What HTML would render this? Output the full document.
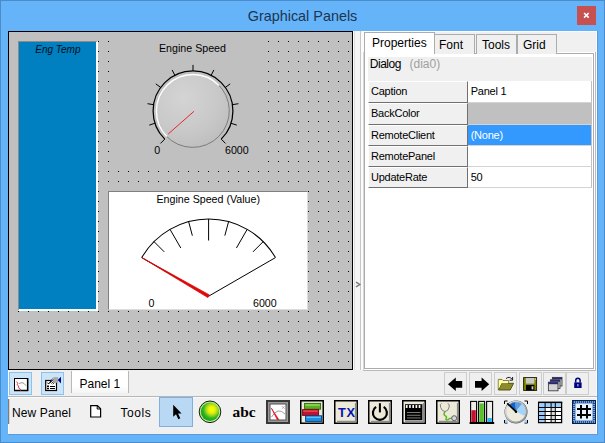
<!DOCTYPE html>
<html><head><meta charset="utf-8">
<style>
*{box-sizing:border-box;margin:0;padding:0}
html,body{width:605px;height:443px;overflow:hidden;background:#65B3F9}
body{position:relative;font-family:"Liberation Sans",sans-serif;font-size:12px;color:#000}
.a{position:absolute}
#win{left:0;top:0;width:605px;height:443px;border:1px solid #4A8CCB;background:#65B3F9}
#inb{left:8px;top:31px;width:590px;height:404px;background:#5E9BD6}
#title{left:0;top:6px;width:605px;text-align:center;font-size:14.4px;color:#1c3550;line-height:20px}
#close{left:577px;top:6px;width:19px;height:19px;background:#C75050}
#client{left:8px;top:31px;width:589px;height:403px;background:#F0F0F0}
#panel{left:8px;top:31px;width:345px;height:339px;background:#C0C0C0;border:1px solid #000;overflow:hidden}
#dots{left:-1px;top:-1px;width:345px;height:339px;background-image:radial-gradient(circle at 0.5px 0.5px,#000 0.55px,rgba(0,0,0,0) 0.9px);background-size:10px 10px}
.pt{font-size:10.67px;line-height:12px;white-space:nowrap;color:#000}
#eng{left:18px;top:41px;width:80px;height:270px;background:#0080C0;border-left:1px solid #8a8a8a;border-top:1px solid #8a8a8a;border-right:2px solid #fff;border-bottom:2px solid #f4ffff}
#knobbox{left:113px;top:35px;width:155px;height:132px;background:#C0C0C0}
#vbox{left:108px;top:191px;width:200px;height:119px;background:#fff;border-left:1px solid #808080;border-top:1px solid #808080;border-right:1px solid #dcdcdc;border-bottom:1px solid #dcdcdc}
#svg{left:0;top:0}
.ui{font-size:12px;line-height:14px;white-space:nowrap}
.th{font-size:11px;letter-spacing:-0.25px;line-height:13px;white-space:nowrap}
/* tabs */
#page{left:364px;top:53px;width:230px;height:316px;background:#fff;border:1px solid #ACACAC}
.tab{top:34px;height:20px;background:#F0F0F0;border:1px solid #ACACAC;border-bottom:none}
#tab0{left:364px;top:32px;width:71px;height:22px;background:#fff;border:1px solid #ACACAC;border-bottom:none}
#hdr{left:368px;top:57px;width:224px;height:24px;background:#F0F0F0}
.lc{left:368px;width:100px;background:#F0F0F0;border-top:1px solid #fff;border-left:1px solid #fff;border-right:1px solid #707070;border-bottom:1px solid #707070}
.vc{left:468px;width:124px;background:#fff;border-bottom:1px solid #d4d4d4;border-right:1px solid #c0c0c0}
/* toolbars */
.b1{top:372px;width:23px;height:23px;background:#CCE4F7;border:1px solid #8EC2EE}
.b2{top:372px;width:23px;height:23px;background:#EFEFEF;border:1px solid #CDCDCD}
</style></head><body>
<div id="win" class="a"></div>
<div id="inb" class="a"></div>
<div id="title" class="a">Graphical Panels</div>
<div id="close" class="a"><svg width="19" height="19" viewBox="0 0 19 19" style="position:absolute;left:0;top:0"><path d="M7.1 7 L11.7 11.6 M11.7 7 L7.1 11.6" stroke="#fff" stroke-width="1.7" fill="none"/></svg></div>
<div id="client" class="a"></div>

<div id="panel" class="a"><div id="dots" class="a"></div></div>
<div id="eng" class="a"></div>
<div class="a pt" style="left:35.3px;top:43.8px;font-style:italic;font-size:10px;color:#000c20">Eng Temp</div>
<div id="knobbox" class="a"></div>
<div id="vbox" class="a"></div>
<div class="a pt" style="left:159px;top:42px">Engine Speed</div>
<div class="a pt" style="left:154.3px;top:143.5px">0</div>
<div class="a pt" style="left:225px;top:143.5px">6000</div>
<div class="a pt" style="left:156.5px;top:193px">Engine Speed (Value)</div>
<div class="a pt" style="left:148.5px;top:296.5px">0</div>
<div class="a pt" style="left:253px;top:296.5px">6000</div>

<div class="a" style="left:596px;top:31px;width:1px;height:403px;background:#FCFEFF"></div>
<div class="a" style="left:353px;top:31px;width:244px;height:1px;background:#FAFDFF"></div>
<div class="a" style="left:8px;top:370px;width:1px;height:64px;background:#FCFEFF"></div>
<!-- splitter -->
<div class="a" style="left:360px;top:31px;width:1px;height:339px;background:#C6C6C6"></div>
<div class="a" style="left:353px;top:31px;width:1px;height:339px;background:#FCFCFC"></div>
<div class="a" style="left:354px;top:31px;width:1px;height:339px;background:#DCDCDC"></div>
<div class="a" style="left:355px;top:31px;width:5px;height:339px;background:#F4F4F4"></div>
<div class="a" style="left:361px;top:31px;width:3px;height:339px;background:#FCFCFC"></div>

<!-- tab control -->
<div class="a" style="left:363px;top:52px;width:233px;height:319px;background:#fff;border:1px solid #B9B9B9;border-left-color:#D6D6D6;border-top:none"></div>
<div id="page" class="a"></div>
<div class="a tab" style="left:434px;width:40.5px"></div>
<div class="a tab" style="left:476px;width:41px"></div>
<div class="a tab" style="left:517px;width:40px"></div>
<div id="tab0" class="a"></div>
<div class="a ui" style="left:372px;top:36px">Properties</div>
<div class="a ui" style="left:439px;top:38px">Font</div>
<div class="a ui" style="left:482px;top:38px">Tools</div>
<div class="a ui" style="left:523px;top:38px">Grid</div>
<div id="hdr" class="a"></div>
<div class="a ui" style="left:369.8px;top:56.5px;letter-spacing:-0.5px">Dialog</div>
<div class="a ui" style="left:409.5px;top:56.5px;color:#A0A0A0">(dia0)</div>
<div class="a lc" style="top:81px;height:22px"></div><div class="a th" style="left:371px;top:85px">Caption</div>
<div class="a vc" style="top:81px;height:22px;background:#fff"></div><div class="a th" style="left:470.7px;top:85px;color:#000">Panel 1</div>
<div class="a lc" style="top:103px;height:22px"></div><div class="a th" style="left:371px;top:107px">BackColor</div>
<div class="a vc" style="top:103px;height:22px;background:#C0C0C0"></div><div class="a lc" style="top:125px;height:21px"></div><div class="a th" style="left:371px;top:129px">RemoteClient</div>
<div class="a vc" style="top:125px;height:21px;background:#3399FF"></div><div class="a th" style="left:470.7px;top:129px;color:#fff">(None)</div>
<div class="a lc" style="top:146px;height:21px"></div><div class="a th" style="left:371px;top:150px">RemotePanel</div>
<div class="a vc" style="top:146px;height:21px;background:#fff"></div><div class="a lc" style="top:167px;height:21px"></div><div class="a th" style="left:371px;top:171px">UpdateRate</div>
<div class="a vc" style="top:167px;height:21px;background:#fff"></div><div class="a th" style="left:470.7px;top:171px;color:#000">50</div>


<!-- toolbar 1 -->
<div class="a" style="left:8px;top:397px;width:589px;height:1px;background:#FAFAFA"></div>
<div class="a" style="left:8px;top:396px;width:589px;height:1px;background:#B6B6B6"></div>
<div class="a b1" style="left:9px"></div>
<div class="a b1" style="left:41px"></div>
<div class="a" style="left:71px;top:371px;width:58px;height:22px;background:linear-gradient(#fff,#fff 70%,#f4f4f4);border-left:1px solid #B8B8B8;border-right:1px solid #B8B8B8"></div>
<div class="a ui" style="left:79.5px;top:376.5px">Panel 1</div>
<div class="a b2" style="left:444px"></div>
<div class="a b2" style="left:469px"></div>
<div class="a b2" style="left:494px"></div>
<div class="a b2" style="left:519px"></div>
<div class="a b2" style="left:542.5px"></div>
<div class="a b2" style="left:566.3px"></div>

<!-- toolbar 2 -->
<div class="a" style="left:8px;top:399px;width:1px;height:25px;background:#7c7c7c"></div><div class="a" style="left:9px;top:399px;width:1px;height:25px;background:#d4d4d4"></div>
<div class="a ui" style="left:12px;top:406px;letter-spacing:0.12px">New Panel</div>
<div class="a ui" style="left:120.4px;top:406px;letter-spacing:0.6px">Tools</div>
<div class="a" style="left:159px;top:397px;width:34px;height:30px;background:#B8D8F4;border:1px solid #7FAEE0"></div>
<div class="a" style="left:232.5px;top:402.8px;font-family:'Liberation Serif',serif;font-weight:bold;font-size:15.4px;line-height:18px">abc</div>

<svg id="svg" class="a" width="605" height="443" viewBox="0 0 605 443">
<defs><radialGradient id="kg" cx="0.38" cy="0.32" r="0.75"><stop offset="0" stop-color="#d4d4d4"/><stop offset="0.6" stop-color="#c9c9c9"/><stop offset="1" stop-color="#bdbdbd"/></radialGradient></defs>
<path d="M164.79 139.11 A39.9 39.9 0 1 1 221.21 139.11" fill="none" stroke="#000" stroke-width="1.25"/>
<path d="M164.79 139.11 L160.47 143.43" stroke="#000" stroke-width="1"/>
<path d="M155.05 123.23 L149.25 125.11" stroke="#000" stroke-width="1"/>
<path d="M153.59 104.66 L147.57 103.70" stroke="#000" stroke-width="1"/>
<path d="M160.72 87.45 L155.79 83.86" stroke="#000" stroke-width="1"/>
<path d="M174.89 75.35 L172.12 69.91" stroke="#000" stroke-width="1"/>
<path d="M193.00 71.00 L193.00 64.90" stroke="#000" stroke-width="1"/>
<path d="M211.11 75.35 L213.88 69.91" stroke="#000" stroke-width="1"/>
<path d="M225.28 87.45 L230.21 83.86" stroke="#000" stroke-width="1"/>
<path d="M232.41 104.66 L238.43 103.70" stroke="#000" stroke-width="1"/>
<path d="M230.95 123.23 L236.75 125.11" stroke="#000" stroke-width="1"/>
<path d="M221.21 139.11 L225.53 143.43" stroke="#000" stroke-width="1"/>
<circle cx="192.7" cy="110.8" r="36.8" fill="url(#kg)"/>
<path d="M217.19 83.60 A36.6 36.6 0 1 1 165.93 135.76" fill="none" stroke="#747474" stroke-width="0.9"/>
<path d="M166.89 136.61 A36.5 36.5 0 1 1 218.96 85.44" fill="none" stroke="#fff" stroke-width="1.4"/>
<path d="M194 111.3 L168.2 134" stroke="#e8262a" stroke-width="1"/>
<path d="M141.74 257.60 A77.2 77.2 0 0 1 275.46 257.60" fill="none" stroke="#000" stroke-width="1.05"/>
<path d="M141.74 257.60 L208.6 296.2 L275.46 257.60" fill="none" stroke="#000" stroke-width="1"/>
<path d="M154.01 241.61 L164.26 251.86" stroke="#000" stroke-width="1"/>
<path d="M170.00 229.34 L180.75 247.96" stroke="#000" stroke-width="1"/>
<path d="M188.62 221.63 L192.37 235.64" stroke="#000" stroke-width="1"/>
<path d="M208.60 219.00 L208.60 240.50" stroke="#000" stroke-width="1"/>
<path d="M228.58 221.63 L224.83 235.64" stroke="#000" stroke-width="1"/>
<path d="M247.20 229.34 L236.45 247.96" stroke="#000" stroke-width="1"/>
<path d="M263.19 241.61 L252.94 251.86" stroke="#000" stroke-width="1"/>
<path d="M141.74 257.60 L209.35 294.90 L207.85 297.50 Z" fill="#de0808" stroke="#de0808" stroke-width="0.8" stroke-linejoin="round"/>
<rect x="14.5" y="378.5" width="13.2" height="12" fill="#fff" stroke="#000" stroke-width="1"/>
<path d="M14 390.5 H28.2 M27.6 378 V391" stroke="#000" stroke-width="1.4" fill="none"/>
<path d="M16.6 381.6 L17.8 383.3 L17 384.6 L18.7 386 L18.3 387.6 L20 388.6 L20.6 390.8" stroke="#e02020" stroke-width="0.9" fill="none"/>
<path d="M19 383.5 Q22.5 381.8 24 383.4 L26 385.8" stroke="#808080" stroke-width="0.8" fill="none"/>
<rect x="45.7" y="380.5" width="10.8" height="10" fill="#fff" stroke="#000" stroke-width="1.2"/>
<path d="M47 385.5 h2 v1.5 h-2z M50 386 h5 v1 h-5z M47 387.8 h2 v1.4 h-2z M50 388 h5 v1 h-5z" fill="#000"/>
<defs><pattern id="hat" x="0" y="0" width="2" height="2" patternUnits="userSpaceOnUse"><rect width="2" height="2" fill="#e8e8e8"/><rect x="0" y="0" width="1" height="1" fill="#404040"/><rect x="1" y="1" width="1" height="1" fill="#404040"/></pattern></defs>
<path d="M49.4 382.2 l3.6 -4.2 l2.6 -0.6 l1 5 l-3.8 2.2 z" fill="url(#hat)"/>
<path d="M47.3 382.6 l1.4 1.4 l3.4 -4.6" stroke="#000" stroke-width="1" fill="none"/>
<rect x="53.4" y="377.2" width="4.8" height="5.6" fill="#a8a8a8"/>
<path d="M61 376.8 V383.4 L57.8 380.1 Z" fill="#000080"/>
<path d="M448 384.3 L455.8 377.6 V380.9 H462.2 V387.8 H455.8 V391 Z" fill="#000"/>
<path d="M489.2 384.3 L481.6 377.6 V380.9 H475 V387.8 H481.6 V391 Z" fill="#000"/>
<path d="M498.3 389.8 V379.4 H502 L503 380.6 H508.6 V383" fill="#FFFFA0" stroke="#6a6a20" stroke-width="0.9"/>
<path d="M498.5 390 L501.6 383.3 H513.6 L510.2 390 Z" fill="#8c8c2a" stroke="#4a4a10" stroke-width="0.9"/>
<path d="M498.8 380 h3 l1 1.2 h5.4 v2 h-6.8 l-2.6 5.6 z" fill="#ffffa8"/>
<path d="M506 378.6 Q509.5 375.8 512 379.2 M512.6 377 V380.2 H509.6" stroke="#000" stroke-width="0.9" fill="none"/>
<rect x="523.6" y="377.6" width="13" height="12.8" fill="#808000" stroke="#1a1a00" stroke-width="0.9"/>
<rect x="525.8" y="378" width="8.6" height="5.6" fill="#c8c8c8"/>
<rect x="526" y="385" width="8.4" height="5.4" fill="#000"/>
<rect x="531.6" y="386.2" width="1.8" height="3.2" fill="#c8c8c8"/>
<rect x="535" y="378.4" width="1" height="1.4" fill="#d8d8a0"/>
<rect x="552.4" y="377.4" width="9.6" height="8.6" fill="#d4d4d4" stroke="#404040" stroke-width="0.9"/>
<rect x="552.4" y="377.4" width="9.6" height="2" fill="#2a2a70"/>
<rect x="550.4" y="379.79999999999995" width="9.6" height="8.6" fill="#d4d4d4" stroke="#404040" stroke-width="0.9"/>
<rect x="550.4" y="379.79999999999995" width="9.6" height="2" fill="#2a2a70"/>
<rect x="548.4" y="382.2" width="9.6" height="8.6" fill="#d4d4d4" stroke="#404040" stroke-width="0.9"/>
<rect x="548.4" y="382.2" width="9.6" height="2" fill="#2a2a70"/>
<path d="M575.7 382.6 V380.6 a2.2 2.4 0 0 1 4.4 0 V382.6" fill="none" stroke="#000080" stroke-width="1.5"/>
<rect x="574.2" y="382.4" width="7.4" height="5.6" fill="#000080"/>
<rect x="577.4" y="384" width="1" height="2.4" fill="#d8d8ff"/>
<path d="M90.7 405.6 H97.4 L100.6 408.8 V417 H90.7 Z" fill="#fff" stroke="#000" stroke-width="1.2" stroke-linejoin="miter"/>
<path d="M97.2 405.6 V409 H100.6" fill="none" stroke="#000" stroke-width="1"/>
<path d="M173.2 404.8 V416.8 L176 414.2 L178.3 419.2 L180.3 418.3 L178 413.4 H181.6 Z" fill="#000"/>
<defs><radialGradient id="led" cx="0.6" cy="0.38" r="0.62"><stop offset="0" stop-color="#ffff00"/><stop offset="0.28" stop-color="#e8f408"/><stop offset="0.5" stop-color="#a4d81c"/><stop offset="0.75" stop-color="#30b424"/><stop offset="1" stop-color="#16a01a"/></radialGradient></defs>
<circle cx="210" cy="411.8" r="10.8" fill="#b4f08c" stroke="#181c10" stroke-width="1"/>
<circle cx="210" cy="411.8" r="9.2" fill="url(#led)"/>
<rect x="267" y="401" width="22" height="22" fill="#9a9a9a" stroke="#383838" stroke-width="2"/>
<rect x="270" y="404" width="16" height="16" fill="#fff" stroke="#505050" stroke-width="1"/>
<path d="M271.5 417 Q278 406.5 285 414" fill="none" stroke="#909090" stroke-width="0.9"/>
<path d="M271.4 408.2 L278.8 419.6 L277.2 419.6 Z" fill="#e01020" stroke="#e01020" stroke-width="0.7"/>
<path d="M282 406.2 l2.6 2.6 m0 -2.6 l-2.6 2.6" stroke="#909090" stroke-width="0.7"/>
<rect x="300.75" y="400.75" width="22.5" height="22.5" fill="#ECE9D8" stroke="#000" stroke-width="1.5"/>
<rect x="304.6" y="403.4" width="16" height="5.8" fill="#58b020" stroke="#2a6a10" stroke-width="0.9"/>
<rect x="302.6" y="409.6" width="16" height="5.8" fill="#c8102c" stroke="#700818" stroke-width="0.9"/>
<rect x="305.6" y="415.8" width="16" height="5.6" fill="#1890e8" stroke="#0a3a80" stroke-width="0.9"/>
<rect x="305.4" y="404.2" width="14.4" height="1.6" fill="#90d850"/>
<rect x="303.4" y="410.4" width="14.4" height="1.4" fill="#e85060"/>
<rect x="306.4" y="416.6" width="14.4" height="1.4" fill="#60c0ff"/>
<rect x="334.75" y="400.75" width="22.5" height="22.5" fill="#ECE9D8" stroke="#000" stroke-width="1.5"/>
<path d="M337 421.6 H355.7 V403" fill="none" stroke="#8c8c8c" stroke-width="1.6"/>
<text x="346.9" y="417" text-anchor="middle" font-family="Liberation Sans" font-weight="bold" font-size="12.8" fill="#0414b4" letter-spacing="0.7">TX</text>
<rect x="368.75" y="400.75" width="22.5" height="22.5" fill="#ECE9D8" stroke="#000" stroke-width="1.5"/>
<path d="M371 421.6 H389.7 V403" fill="none" stroke="#8c8c8c" stroke-width="1.6"/>
<path d="M376.1 406.9 A7 7 0 1 0 383.7 406.9" fill="none" stroke="#000" stroke-width="2.2"/>
<path d="M379.9 403.2 V412.4" stroke="#000" stroke-width="2"/>
<rect x="402.75" y="400.75" width="22.5" height="22.5" fill="#ECE9D8" stroke="#000" stroke-width="1.5"/>
<path d="M405 421.6 H423.7 V403" fill="none" stroke="#8c8c8c" stroke-width="1.6"/>
<rect x="405" y="404.2" width="17.4" height="16" fill="#000"/>
<rect x="405.8" y="405" width="15.8" height="3" fill="#f4f4f4"/>
<rect x="407.6" y="405" width="1.5" height="3" fill="#000"/>
<rect x="410.8" y="405" width="1.5" height="3" fill="#000"/>
<rect x="414.0" y="405" width="1.5" height="3" fill="#000"/>
<rect x="417.2" y="405" width="1.5" height="3" fill="#000"/>
<rect x="420.4" y="405" width="1.5" height="3" fill="#000"/>
<rect x="407" y="412" width="13.4" height="0.9" fill="#8a8a8a"/>
<rect x="407" y="414.8" width="13.4" height="0.9" fill="#8a8a8a"/>
<rect x="407" y="417.5" width="13.4" height="0.9" fill="#8a8a8a"/>
<rect x="436.75" y="400.75" width="22.5" height="22.5" fill="#ECE9D8" stroke="#000" stroke-width="1.5"/>
<path d="M439 421.6 H457.7 V403" fill="none" stroke="#8c8c8c" stroke-width="1.6"/>
<path d="M441.6 403.4 Q439.4 404 440.6 407.4 Q442 411.4 445 411.6 Q448.4 411.2 449.2 407 Q449.8 403.8 447.6 403.4" fill="none" stroke="#808080" stroke-width="1"/>
<path d="M445 411.8 Q443 414.4 445 415.6 Q447.4 416.6 446 418.6 Q445.6 420.6 448 419.6 Q449.6 418 452 418.4" fill="none" stroke="#58b820" stroke-width="1.5"/>
<circle cx="454.2" cy="418.2" r="2.5" fill="#d8d8d8" stroke="#606060" stroke-width="1"/>
<rect x="470.6" y="401.4" width="6" height="21" fill="#ececec" stroke="#000" stroke-width="1.1"/>
<rect x="471.40000000000003" y="410.2" width="4.4" height="11.8" fill="#c8102c"/>
<rect x="478.6" y="401.4" width="6" height="21" fill="#ececec" stroke="#000" stroke-width="1.1"/>
<rect x="479.40000000000003" y="403.4" width="4.4" height="18.6" fill="#58c028"/>
<rect x="486.6" y="401.4" width="6" height="21" fill="#ececec" stroke="#000" stroke-width="1.1"/>
<rect x="487.40000000000003" y="418" width="4.4" height="4.0" fill="#20b8f0"/>
<rect x="469.6" y="422" width="24.6" height="2" fill="#000"/>
<defs><linearGradient id="ring" x1="0" y1="0" x2="1" y2="1"><stop offset="0" stop-color="#e8e8e8"/><stop offset="0.5" stop-color="#b8b8b8"/><stop offset="1" stop-color="#888888"/></linearGradient></defs>
<path d="M504.5 404 V401 H507.5 M524.5 401 H527.5 V404 M527.5 420 V423 H524.5 M507.5 423 H504.5 V420" fill="none" stroke="#000" stroke-width="1"/>
<rect x="505" y="419.6" width="2.6" height="3" fill="#a8d0f8"/><rect x="524.4" y="419.6" width="2.6" height="3" fill="#a8d0f8"/>
<circle cx="516" cy="411.9" r="11.5" fill="#505050"/><circle cx="516" cy="411.9" r="10.4" fill="#ECEBDC" stroke="url(#ring)" stroke-width="1.6"/>
<path d="M516 411.6 L509.21 404.81 A9.6 9.6 0 0 1 515.50 402.01 Z" fill="#1464c8"/>
<path d="M516 411.6 L515.50 402.01 A9.6 9.6 0 0 1 521.91 404.04 Z" fill="#5a9ee0"/>
<path d="M516 411.6 L521.91 404.04 A9.6 9.6 0 0 1 524.55 415.96 Z" fill="#a4d4fc"/>
<path d="M516 411.7 L507.2 403.4" stroke="#000" stroke-width="1.6"/>
<circle cx="516" cy="411.8" r="1.2" fill="#000"/>
<rect x="538.6" y="402.6" width="23" height="20" fill="#fff" stroke="#000" stroke-width="1.3"/>
<rect x="538" y="401.6" width="24.2" height="1.6" fill="#000"/>
<rect x="539.4" y="403.4" width="21.6" height="3.6" fill="#99ccff"/>
<rect x="539.4" y="403.4" width="5" height="18.6" fill="#99ccff"/>
<rect x="551" y="407" width="3.6" height="15" fill="#d8d8d8"/>
<rect x="544.6" y="403" width="1" height="19.4" fill="#000"/>
<rect x="550.6" y="403" width="1" height="19.4" fill="#000"/>
<rect x="554.8" y="403" width="1" height="19.4" fill="#000"/>
<rect x="539" y="407" width="22.4" height="1" fill="#000"/>
<rect x="539" y="411" width="22.4" height="1" fill="#000"/>
<rect x="539" y="415" width="22.4" height="1" fill="#000"/>
<rect x="539" y="419" width="22.4" height="1" fill="#000"/>
<rect x="572.5" y="400.5" width="23" height="23" fill="#1C4E9C" stroke="#0A1E40" stroke-width="1"/>
<path d="M574 401.4 h1 v1.1 h-1z M574 421.5 h1 v1.1 h-1z M576 401.4 h1 v1.1 h-1z M576 421.5 h1 v1.1 h-1z M578 401.4 h1 v1.1 h-1z M578 421.5 h1 v1.1 h-1z M580 401.4 h1 v1.1 h-1z M580 421.5 h1 v1.1 h-1z M582 401.4 h1 v1.1 h-1z M582 421.5 h1 v1.1 h-1z M584 401.4 h1 v1.1 h-1z M584 421.5 h1 v1.1 h-1z M586 401.4 h1 v1.1 h-1z M586 421.5 h1 v1.1 h-1z M588 401.4 h1 v1.1 h-1z M588 421.5 h1 v1.1 h-1z M590 401.4 h1 v1.1 h-1z M590 421.5 h1 v1.1 h-1z M592 401.4 h1 v1.1 h-1z M592 421.5 h1 v1.1 h-1z M594 401.4 h1 v1.1 h-1z M594 421.5 h1 v1.1 h-1z M573.4 404 h1.1 v1 h-1.1z M593.5 404 h1.1 v1 h-1.1z M573.4 406 h1.1 v1 h-1.1z M593.5 406 h1.1 v1 h-1.1z M573.4 408 h1.1 v1 h-1.1z M593.5 408 h1.1 v1 h-1.1z M573.4 410 h1.1 v1 h-1.1z M593.5 410 h1.1 v1 h-1.1z M573.4 412 h1.1 v1 h-1.1z M593.5 412 h1.1 v1 h-1.1z M573.4 414 h1.1 v1 h-1.1z M593.5 414 h1.1 v1 h-1.1z M573.4 416 h1.1 v1 h-1.1z M593.5 416 h1.1 v1 h-1.1z M573.4 418 h1.1 v1 h-1.1z M593.5 418 h1.1 v1 h-1.1z M573.4 420 h1.1 v1 h-1.1z M593.5 420 h1.1 v1 h-1.1z" fill="#D4ECFF"/>
<rect x="575.4" y="403.4" width="17.2" height="17.2" fill="#E6F3FF"/>
<path d="M580 405 h2 v13.4 h-2z M586 405 h2 v13.4 h-2z M577 408 h14 v2 h-14z M577 414 h14 v2 h-14z" fill="#000"/>
<path d="M356 282.2 L359.8 284.5 L356 286.8" fill="none" stroke="#787878" stroke-width="1.4"/>
</svg>
</body></html>
